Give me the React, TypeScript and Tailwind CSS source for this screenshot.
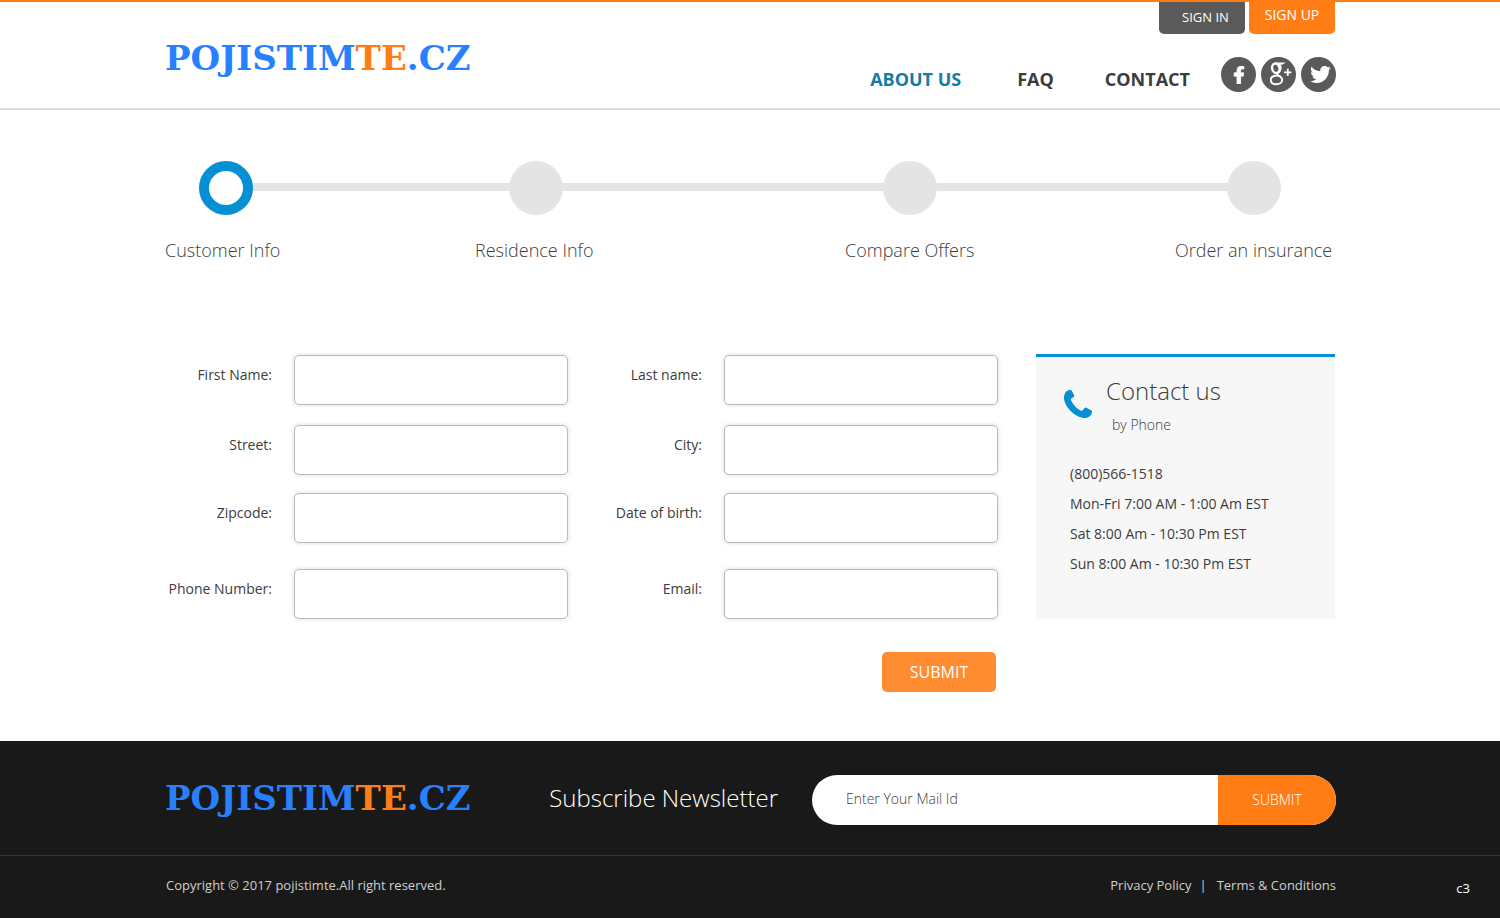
import { FaFacebookF, FaTwitter } from 'react-icons/fa';

const STEPS = ['Customer Info', 'Residence Info', 'Compare Offers', 'Order an insurance'];

const FIELDS = [
  { id: 'first-name', label: 'First Name:', type: 'text' },
  { id: 'last-name', label: 'Last name:', type: 'text' },
  { id: 'street', label: 'Street:', type: 'text' },
  { id: 'city', label: 'City:', type: 'text' },
  { id: 'zipcode', label: 'Zipcode:', type: 'text' },
  { id: 'birth-date', label: 'Date of birth:', type: 'text' },
  { id: 'phone', label: 'Phone Number:', type: 'tel' },
  { id: 'email', label: 'Email:', type: 'email' },
];

const CONTACT_LINES = [
  '(800)566-1518',
  'Mon-Fri 7:00 AM - 1:00 Am EST',
  'Sat 8:00 Am - 10:30 Pm EST',
  'Sun 8:00 Am - 10:30 Pm EST',
];

function Logo() {
  return (
    <a
      href="#"
      className="font-['DejaVu_Serif',serif] text-[34px] leading-10 font-bold text-[#2980ff]"
    >
      POJISTIM<span className="text-[#ff7d14]">TE</span>.CZ
    </a>
  );
}

function GooglePlusIcon() {
  return (
    <svg viewBox="0 0 35 35" className="size-full" fill="none" stroke="currentColor" aria-hidden="true">
      <ellipse cx="14.8" cy="11.3" rx="3.7" ry="4.8" strokeWidth="2.4" transform="rotate(-12 14.8 11.3)" />
      <path d="M14.5 6h8.300l-1.800 1.200h-3" strokeWidth="1.200" />
      <path d="M18 7c2.400 2.200 2.600 6-.2 8.300-2 1.700-1.600 2.600.4 4" strokeWidth="1.600" />
      <path d="M18 19.300c-1-.8-1.800-.9-2.500-.8-4 .3-5.900 2.200-5.700 4.800.2 2.500 2.600 4 5.400 4 3.500 0 6-1.800 6-4.500 0-2-1.300-3-3.200-4.200" strokeWidth="1.900" />
      <path d="M26.800 11.800v7.200M23.200 15.400h7.200" strokeWidth="1.800" />
    </svg>
  );
}

function PhoneIcon() {
  return (
    <svg viewBox="0 0 28 28" className="size-7 text-[#058fd4]" fill="currentColor" aria-hidden="true">
      <path d="M5.300.1C6.700-.2 7.500.3 8 1.200l2.200 4c.4.800.1 1.300-.6 1.800L7.300 8.500c-.6.400-.6 1-.3 1.700 1.900 4.200 5.400 8.200 9.700 10.300.8.400 1.500.4 2-.2l1.900-2.200c.5-.6 1.100-.7 1.800-.3l4.700 2.500c.8.500 1.100 1.200.8 2.200-.7 3.200-3.500 5.500-7 5.500C12.500 28 1.500 18.500.1 9.500-.4 5 1.300 1 5.300.1z" />
    </svg>
  );
}

function Header() {
  const socialClass = 'flex size-[35px] items-center justify-center rounded-full bg-[#5a5a5a] text-white';

  return (
    <header className="border-t-2 border-b-2 border-t-[#ff7d14] border-b-[#dcdcdc]">
      <div className="mx-auto flex min-h-[106px] max-w-[1170px] flex-wrap items-start justify-between">
        <div className="pt-9">
          <Logo />
        </div>
        <div className="flex flex-col items-end">
          <div className="flex gap-1 text-sm text-white">
            <a href="#" className="h-8 w-[86px] rounded-b-[5px] bg-[#5a5a5a] pt-[5px] pl-[23px] text-[13px] leading-5">
              SIGN IN
            </a>
            <a href="#" className="h-8 w-[86px] rounded-b-[5px] bg-[#ff7d14] pt-[3px] text-center leading-5">
              SIGN UP
            </a>
          </div>
          <div className="mt-[23px] -mr-px flex items-start gap-[31px]">
            <nav className="mt-2 flex text-lg font-bold text-[#3c3c3c]">
              <a href="#" className="mr-14 text-[#147da0]">ABOUT US</a>
              <a href="#" className="mr-[51px]">FAQ</a>
              <a href="#">CONTACT</a>
            </nav>
            <div className="flex gap-[5px]">
              <a href="#" aria-label="Facebook" className={socialClass}>
                <FaFacebookF className="size-[18px]" stroke="currentColor" strokeWidth="24" />
              </a>
              <a href="#" aria-label="Google Plus" className={socialClass}>
                <GooglePlusIcon />
              </a>
              <a href="#" aria-label="Twitter" className={socialClass}>
                <FaTwitter className="ml-1 size-[21px]" />
              </a>
            </div>
          </div>
        </div>
      </div>
    </header>
  );
}

function Steps() {
  return (
    <ol className="relative mt-[51px] grid grid-cols-[310fr_370fr_330fr_160fr]">
      {/* connecting line, runs behind the circles */}
      <li aria-hidden="true" className="absolute top-[22px] right-[81px] left-[60px] h-2 bg-[#e4e4e4]" />
      {STEPS.map((step, index) => (
        <li key={step} className="relative flex w-fit min-w-[121px] flex-col items-center">
          <span
            className={`size-[54px] rounded-full ${
              index === 0 ? 'border-[10px] border-[#058fd4] bg-white' : 'bg-[#e4e4e4]'
            }`}
          />
          <span className="mt-[21px] self-start text-lg font-light whitespace-nowrap text-[#3c3c3c]">
            {step}
          </span>
        </li>
      ))}
    </ol>
  );
}

function CustomerForm() {
  return (
    <form className="w-full pt-px lg:flex-1" onSubmit={(event) => event.preventDefault()}>
      <div className="grid grid-cols-[107px_1fr_112px_1fr] grid-rows-[70px_68px_76px_50px] gap-x-[22px]">
        {FIELDS.map((field) => (
          <div key={field.id} className="contents">
            <label htmlFor={field.id} className="pt-2.5 text-right text-sm whitespace-nowrap">
              {field.label}
            </label>
            <input
              id={field.id}
              type={field.type}
              className="h-[50px] w-full min-w-0 rounded-[5px] border border-[#b9b9b9] bg-white px-3 text-sm shadow-[0_0_5px_rgba(0,0,0,0.14)]"
            />
          </div>
        ))}
      </div>
      <div className="mt-[33px] flex justify-end pr-0.5">
        <button type="submit" className="h-10 w-[114px] rounded-[5px] bg-[#ff8c30] text-base text-white">
          SUBMIT
        </button>
      </div>
    </form>
  );
}

function ContactCard() {
  return (
    <aside className="w-[299px] shrink-0 border-t-[3px] border-[#058fd4] bg-[#f7f7f7] pt-4 pb-10">
      <div className="flex items-start pl-7">
        <div className="pt-[17px]">
          <PhoneIcon />
        </div>
        <div className="ml-3.5">
          <h2 className="text-2xl leading-9 font-light">Contact us</h2>
          <p className="pl-1.5 text-sm leading-8 font-light">by Phone</p>
        </div>
      </div>
      <ul className="mt-[18px] pl-[34px] text-sm leading-[30px]">
        {CONTACT_LINES.map((line) => (
          <li key={line}>{line}</li>
        ))}
      </ul>
    </aside>
  );
}

function Footer() {
  return (
    <footer className="relative bg-[#191919] text-white">
      <div className="mx-auto flex min-h-[114px] max-w-[1170px] flex-wrap items-center justify-between">
        <Logo />
        <form className="-mr-px flex items-center gap-[34px]" onSubmit={(event) => event.preventDefault()}>
          <label htmlFor="newsletter" className="text-2xl font-light">
            Subscribe Newsletter
          </label>
          <div className="mt-1 flex h-[50px] w-[524px] overflow-hidden rounded-full bg-white">
            <input
              id="newsletter"
              type="email"
              placeholder="Enter Your Mail Id"
              className="min-w-0 flex-1 pb-0.5 pl-[34px] text-sm font-light text-[#3c3c3c] placeholder:text-[#3c3c3c]"
            />
            <button type="submit" className="w-[118px] bg-[#ff7d14] text-sm font-light">
              SUBMIT
            </button>
          </div>
        </form>
      </div>
      <div className="border-t border-[#333333]">
        <div className="mx-auto flex h-[62px] max-w-[1170px] items-center justify-between pb-[3px] text-[13px] text-[#cfcfcf]">
          <p className="pl-px">Copyright © 2017 pojistimte.All right reserved.</p>
          <p className="-mr-px flex">
            <a href="#">Privacy Policy</a>
            <span className="mr-2.5 ml-2">|</span>
            <a href="#">Terms &amp; Conditions</a>
          </p>
        </div>
      </div>
      <span className="absolute right-[30px] bottom-5 text-[13px] leading-5">c3</span>
    </footer>
  );
}

export default function App() {
  return (
    <div className="bg-white font-['Open_Sans',sans-serif] text-[#3c3c3c]">
      <Header />
      <main className="mx-auto max-w-[1170px]">
        <Steps />
        <section className="mt-[90px] flex flex-col items-start gap-[38px] pb-[49px] lg:flex-row">
          <CustomerForm />
          <ContactCard />
        </section>
      </main>
      <Footer />
    </div>
  );
}
